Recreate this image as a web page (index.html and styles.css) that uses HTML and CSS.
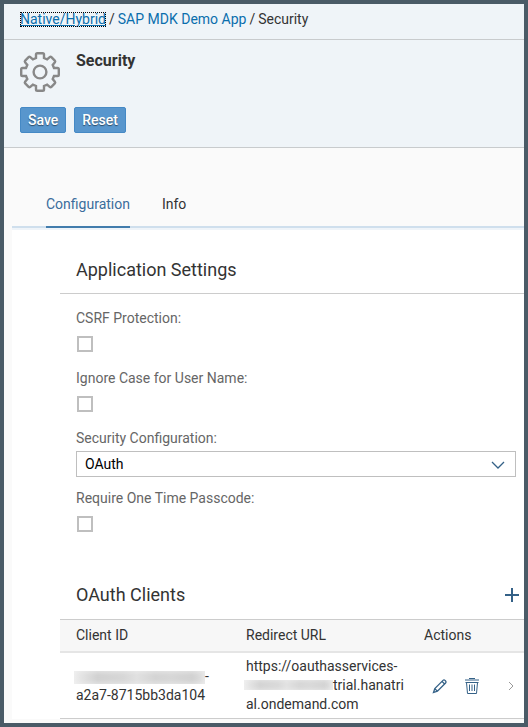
FILE: index.html
```html
<!DOCTYPE html>
<html lang="en">
<head>
<meta charset="utf-8">
<title>Security</title>
<link rel="stylesheet" href="styles.css">
</head>
<body>
<div class="frame">
  <nav class="breadcrumb" aria-label="Breadcrumb">
    <a class="crumb focused" href="#">Native/Hybrid</a>
    <span class="slash">/</span>
    <a class="crumb" href="#">SAP MDK Demo App</a>
    <span class="slash">/</span>
    <span>Security</span>
  </nav>
  <header class="page-header">
    <div class="title-row">
      <svg class="gear" viewBox="0 0 40 40" aria-hidden="true">
        <path d="M16 6V2.5Q16 1.2 17.3 1.2H22.7Q24 1.2 24 2.5V6L27.1 7.3L29.7 5.1Q30.6 4.4 31.4 5.2L34.8 8.6Q35.6 9.4 34.9 10.3L32.7 12.9L34 16H37.5Q38.8 16 38.8 17.3V22.7Q38.8 24 37.5 24H34L32.7 27.1L34.9 29.7Q35.6 30.6 34.8 31.4L31.4 34.8Q30.6 35.6 29.7 34.9L27.1 32.7L24 34V37.5Q24 38.8 22.7 38.8H17.3Q16 38.8 16 37.5V34L12.9 32.7L10.3 34.9Q9.4 35.6 8.6 34.8L5.2 31.4Q4.4 30.6 5.1 29.7L7.3 27.1L6 24H2.5Q1.2 24 1.2 22.7V17.3Q1.2 16 2.5 16H6L7.3 12.9L5.1 10.3Q4.4 9.4 5.2 8.6L8.6 5.2Q9.4 4.4 10.3 5.1L12.9 7.3Z"/>
        <circle cx="20" cy="20" r="6.4"/>
      </svg>
      <h1>Security</h1>
    </div>
    <div class="buttons">
      <button class="btn" type="button">Save</button>
      <button class="btn" type="button">Reset</button>
    </div>
  </header>
  <main class="main">
    <div class="tabs" role="tablist">
      <button class="tab active" role="tab" aria-selected="true" type="button">Configuration</button>
      <button class="tab" role="tab" aria-selected="false" type="button">Info</button>
    </div>
    <div class="panel">
      <section class="settings">
        <h2>Application Settings</h2>
        <form class="form">
          <div class="field">
            <label for="csrf">CSRF Protection:</label>
            <input class="check" type="checkbox" id="csrf">
          </div>
          <div class="field">
            <label for="ignore-case">Ignore Case for User Name:</label>
            <input class="check" type="checkbox" id="ignore-case">
          </div>
          <div class="field">
            <label for="config">Security Configuration:</label>
            <div class="select-wrap">
              <select id="config"><option>OAuth</option></select>
              <svg class="arrow" viewBox="0 0 14 8" aria-hidden="true"><path d="M1 1L7 7L13 1"/></svg>
            </div>
          </div>
          <div class="field">
            <label for="otp">Require One Time Passcode:</label>
            <input class="check" type="checkbox" id="otp">
          </div>
        </form>
      </section>
      <section class="clients">
        <div class="clients-head">
          <h2>OAuth Clients</h2>
          <button class="icon-btn" type="button" aria-label="Add">
            <svg class="plus" viewBox="0 0 14 14"><path d="M7 0V14M0 7H14"/></svg>
          </button>
        </div>
        <table>
          <thead>
            <tr><th class="col-id">Client ID</th><th class="col-url">Redirect URL</th><th>Actions</th></tr>
          </thead>
          <tbody>
            <tr>
              <td><span class="redacted redacted-id"></span>-<br>a2a7-8715bb3da104</td>
              <td>https://oauthasservices-<br><span class="redacted redacted-url"></span>trial.hanatri<br>al.ondemand.com</td>
              <td>
                <div class="actions">
                  <button class="icon-btn" type="button" aria-label="Edit">
                    <svg class="icon pencil" viewBox="0 0 16 16"><path d="M1.5 14.5L2.8 10.6L11 2.4Q12 1.4 13 2.4L13.6 3Q14.6 4 13.6 5L5.4 13.2ZM2.8 10.6L5.4 13.2M10 3.4L12.6 6"/></svg>
                  </button>
                  <button class="icon-btn" type="button" aria-label="Delete">
                    <svg class="icon" viewBox="0 0 16 16"><path d="M5 .5H11M1 2H15M1.5 4.5H14.5M2.5 4.5L3.5 15.5H12.5L13.5 4.5M5.5 6.5V13M8 6.5V13M10.5 6.5V13"/></svg>
                  </button>
                  <svg class="chevron" viewBox="0 0 6 10" aria-hidden="true"><path d="M1 1L5 5L1 9"/></svg>
                </div>
              </td>
            </tr>
          </tbody>
        </table>
      </section>
    </div>
  </main>
</div>
</body>
</html>
```

FILE: styles.css
```css
* { box-sizing: border-box; }

body {
  margin: 0;
  font: 14px/19px Roboto, "Liberation Sans", sans-serif;
  color: #333;
}

h1, h2 { margin: 0; }

button, select { font: inherit; }

.frame {
  min-height: 100vh;
  border: 4px solid #4a5b67;
  background: #fafafa;
}

.breadcrumb {
  display: flex;
  gap: 3px;
  padding: 8px 16px;
  line-height: 15px;
  height: 36px;
  background: #eff4f8;
  border-bottom: 1px solid #c8cbcd;
}

.crumb { color: #0a6ead; text-decoration: none; }

.focused {
  height: 15px;
  outline: 1px dotted #000;
  outline-offset: -1px;
  text-decoration: underline;
}

.page-header {
  padding: 12px 16px 14px;
  background: #eff4f8;
  border-bottom: 1px solid #c8cbcd;
}

.title-row {
  display: flex;
  gap: 16px;
  height: 55px;
}

.gear {
  width: 40px;
  height: 40px;
  fill: none;
  stroke: #888;
  stroke-width: 2.4;
}

h1 {
  font-size: 16px;
  line-height: 18px;
  font-weight: 700;
}

.buttons { display: flex; gap: 8px; }

.btn {
  height: 26px;
  padding: 0 7px;
  border: 1px solid #4589c5;
  border-radius: 2px;
  background: #5896cd;
  color: #fff;
  font-weight: 500;
  text-shadow: 0 1px 1px rgba(0, 0, 0, 0.5);
}

.main { padding-left: 8px; }

.tabs {
  display: flex;
  gap: 32px;
  padding: 36px 34px 0;
  border-bottom: 2px solid #cfdfed;
}

.tab {
  height: 44px;
  margin-bottom: -2px;
  padding: 0 0 2px;
  border: 0;
  border-bottom: 2px solid transparent;
  background: none;
  color: #333;
}

.tab.active {
  border-bottom-color: #427cac;
  color: #3a6d9c;
}

.panel {
  padding-left: 48px;
  border-top: 2px solid #eff4f9;
  background: #fff;
}

h2 {
  font-size: 18px;
  line-height: 24px;
  font-weight: 400;
}

.settings h2 {
  padding: 28px 16px 11px;
  border-bottom: 1px solid #ccc;
}

.form { padding: 14px 8px 22px 16px; }

.field { height: 60px; }

.field label {
  display: block;
  height: 23px;
  line-height: 20px;
  color: #666;
}

.check {
  appearance: none;
  display: block;
  width: 16px;
  height: 16px;
  margin: 5px 1px;
  border: 2px solid #bfbfbf;
  background: #fff;
}

.select-wrap { position: relative; }

select {
  appearance: none;
  display: block;
  width: 100%;
  height: 26px;
  padding: 0 8px;
  border: 1px solid #bfbfbf;
  border-radius: 0;
  background: #fff;
  color: #000;
}

.arrow {
  position: absolute;
  right: 11px;
  top: 10px;
  width: 14px;
  height: 8px;
  fill: none;
  stroke: #346187;
  stroke-width: 1.3;
  pointer-events: none;
}

.clients-head {
  display: flex;
  align-items: center;
  justify-content: space-between;
  height: 49px;
  padding: 0 5px 0 16px;
}

.icon-btn {
  display: flex;
  padding: 0;
  border: 0;
  background: none;
}

.icon-btn svg { fill: none; stroke: #346187; }

.plus { width: 14px; height: 14px; stroke-width: 2; }

.icon { width: 16px; height: 16px; stroke-width: 1; }

.icon-btn .pencil { stroke-width: 1.3; }

table {
  width: 100%;
  table-layout: fixed;
  border-spacing: 0;
  border-top: 1px solid #ccc;
}

.col-id { width: 170px; }

.col-url { width: 178px; }

th {
  height: 33px;
  padding: 0 0 0 16px;
  border-bottom: 2px solid #e5e5e5;
  background: #f7f7f7;
  font-weight: 400;
  text-align: left;
}

td {
  height: 66px;
  padding: 4px 0 4px 16px;
  border-bottom: 1px solid #ccc;
  white-space: nowrap;
}

.redacted {
  display: inline-block;
  height: 13px;
  margin-left: -2px;
  background: linear-gradient(90deg, #ececec, #d0d0d0 18%, #d6d6d6 38%, #e0e0e0 48%, #d3d3d3 62%, #d6d6d6 74%, #d0d0d0 90%, #e0e0e0);
  box-shadow: inset 0 0 6px #f0f0f0;
}

.redacted-id { width: 131px; vertical-align: -3px; }

.redacted-url { width: 89px; height: 10px; vertical-align: 0; }

.actions {
  display: flex;
  align-items: center;
  gap: 16px;
  padding: 0 10px 0 8px;
}

.chevron {
  width: 6px;
  height: 10px;
  margin-left: auto;
  fill: none;
  stroke: #999;
}
```
